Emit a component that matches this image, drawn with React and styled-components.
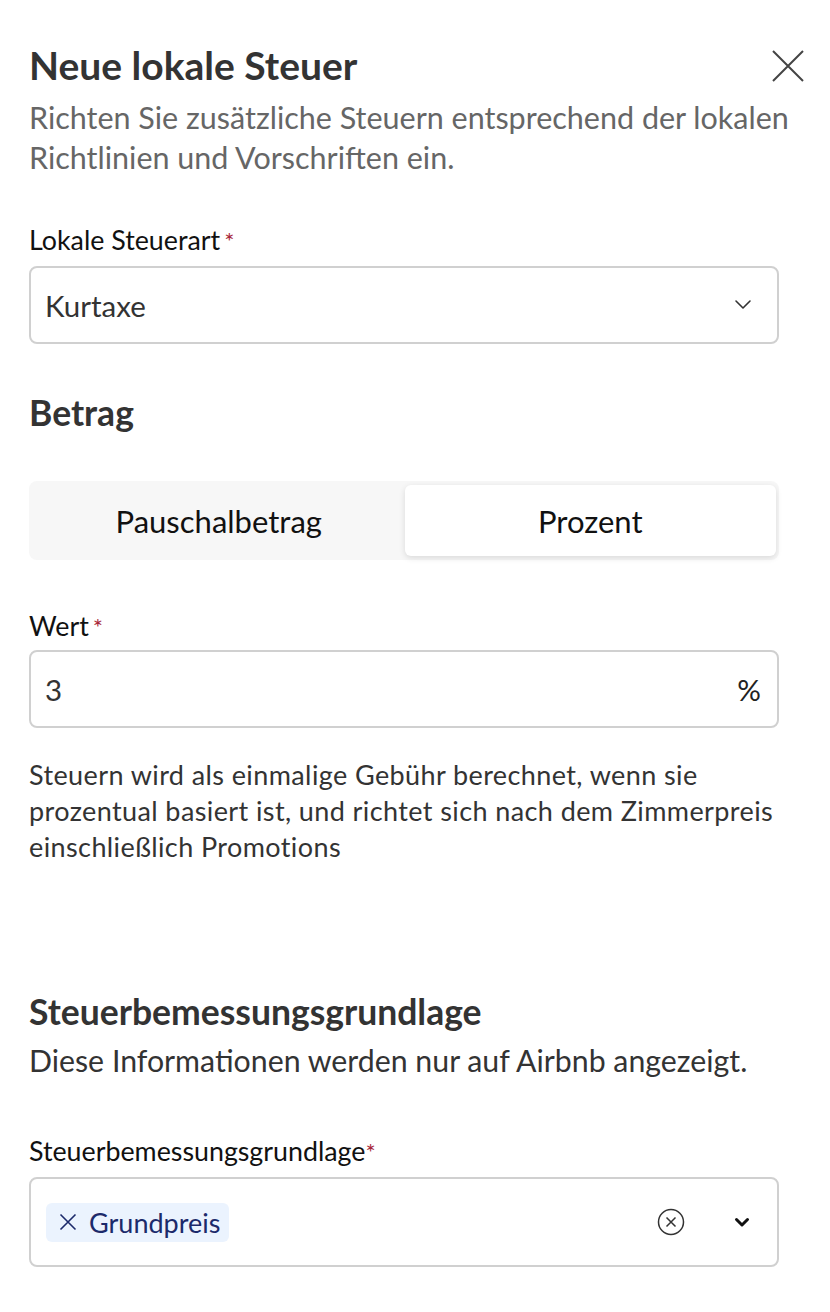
import React, { useState } from 'react';
import styled, { createGlobalStyle } from 'styled-components';

const GlobalStyle = createGlobalStyle`
  html, body {
    margin: 0;
    padding: 0;
    background: #ffffff;
  }
  body {
    font-family: Lato, "Noto Sans", sans-serif;
    color: #222222;
  }
  * { box-sizing: border-box; }
`;

const Page = styled.div`
  width: 830px;
  padding: 42px 25px 40px 29px;
`;

const Header = styled.div`
  display: flex;
  justify-content: space-between;
  align-items: flex-start;
`;

const Title = styled.h1`
  margin: 0;
  font-size: 39px;
  line-height: 46px;
  font-weight: 700;
  color: #333333;
`;

const CloseButton = styled.button`
  border: none;
  background: none;
  padding: 0;
  margin-top: 7px;
  width: 34px;
  height: 34px;
  cursor: pointer;
  display: flex;
  align-items: center;
  justify-content: center;
`;

const Intro = styled.p`
  margin: 9px 0 0;
  font-size: 30.5px;
  line-height: 40px;
  color: #666666;
`;

const Form = styled.div`
  width: 750px;
`;

const Field = styled.div`
  margin-top: ${p => p.$top || 0}px;
`;

const Label = styled.div`
  font-size: 26.8px;
  line-height: 32px;
  color: #111111;
  margin-bottom: ${p => p.$gap || 9}px;
`;

const Required = styled.span`
  color: #a8283a;
  margin-left: ${p => (p.$tight ? 0 : 4)}px;
  font-size: 24px;
`;

const Box = styled.div`
  display: flex;
  align-items: center;
  height: ${p => p.$height || 78}px;
  border: 2px solid #d0d0d0;
  border-radius: 8px;
  padding: 0 16px 0 ${p => p.$left || 14}px;
  font-size: 29.5px;
  color: #333333;
`;

const BoxValue = styled.div`
  flex: 1;
`;

const Suffix = styled.span`
  color: #222222;
`;

const ChevronSlot = styled.div`
  display: flex;
  align-items: center;
  margin-right: 9px;
`;

const SectionTitle = styled.h2`
  margin: ${p => p.$top || 0}px 0 0;
  font-size: 35.5px;
  line-height: 42px;
  font-weight: 700;
  color: #333333;
`;

const SectionText = styled.p`
  margin: 7px 0 0;
  font-size: 30.3px;
  line-height: 40px;
  color: #333333;
`;

const Segmented = styled.div`
  margin-top: 47px;
  display: grid;
  grid-template-columns: 1fr 1fr;
  padding: 4px 3px 4px 4px;
  height: 79px;
  background: #f7f7f7;
  border-radius: 8px;
`;

const Segment = styled.button`
  border: none;
  font-family: inherit;
  font-size: 31px;
  color: #111111;
  border-radius: 6px;
  cursor: pointer;
  background: ${p => (p.$active ? '#ffffff' : 'transparent')};
  box-shadow: ${p => (p.$active ? '0 2px 6px rgba(0,0,0,0.12)' : 'none')};
`;

const Help = styled.p`
  margin: 29px -26px 0 0;
  font-size: 27px;
  letter-spacing: 0.4px;
  line-height: 36px;
  color: #333333;
`;

const Chip = styled.div`
  display: flex;
  align-items: center;
  gap: 12px;
  height: 39px;
  padding: 0 9px 0 13px;
  background: #ebf3fe;
  border-radius: 6px;
  color: #1c2a6b;
  font-size: 27px;
`;

const Spacer = styled.div`
  flex: 1;
`;

const IconSlot = styled.div`
  display: flex;
  align-items: center;
  justify-content: center;
  width: 30px;
  margin-left: ${p => p.$ml || 0}px;
  margin-right: ${p => p.$mr || 0}px;
`;

const Chevron = ({ bold }) => (
  <svg width="18" height="12" viewBox="0 0 18 12" fill="none">
    <path
      d={bold ? 'M3.5 3.5l5.5 5.5 5.5-5.5' : 'M2 2l7 7 7-7'}
      stroke={bold ? '#111' : '#333'}
      strokeWidth={bold ? 3 : 1.6}
      strokeLinecap="round"
      strokeLinejoin="round"
    />
  </svg>
);

export default function App() {
  const [mode, setMode] = useState('percent');

  return (
    <>
      <GlobalStyle />
      <Page>
        <Header>
          <Title>Neue lokale Steuer</Title>
          <CloseButton aria-label="Schließen">
            <svg width="34" height="34" viewBox="0 0 34 34">
              <path d="M2 2l30 30M32 2L2 32" stroke="#444" strokeWidth="2" />
            </svg>
          </CloseButton>
        </Header>
        <Intro>
          Richten Sie zusätzliche Steuern entsprechend der lokalen Richtlinien und Vorschriften ein.
        </Intro>

        <Form>
          <Field $top={47}>
            <Label>
              Lokale Steuerart<Required>*</Required>
            </Label>
            <Box>
              <BoxValue>Kurtaxe</BoxValue>
              <ChevronSlot>
                <Chevron />
              </ChevronSlot>
            </Box>
          </Field>

          <SectionTitle $top={48}>Betrag</SectionTitle>

          <Segmented>
            <Segment $active={mode === 'flat'} onClick={() => setMode('flat')}>
              Pauschalbetrag
            </Segment>
            <Segment $active={mode === 'percent'} onClick={() => setMode('percent')}>
              Prozent
            </Segment>
          </Segmented>

          <Field $top={50}>
            <Label $gap={7}>
              Wert<Required>*</Required>
            </Label>
            <Box>
              <BoxValue>3</BoxValue>
              <Suffix>%</Suffix>
            </Box>
          </Field>

          <Help>
            Steuern wird als einmalige Gebühr berechnet, wenn sie prozentual basiert ist, und richtet
            sich nach dem Zimmerpreis einschließlich Promotions
          </Help>

          <SectionTitle $top={126}>Steuerbemessungsgrundlage</SectionTitle>
          <SectionText>Diese Informationen werden nur auf Airbnb angezeigt.</SectionText>

          <Field $top={55}>
            <Label $gap={9}>
              Steuerbemessungsgrundlage<Required $tight>*</Required>
            </Label>
            <Box $height={90} $left={15}>
              <Chip>
                <svg width="18" height="18" viewBox="0 0 18 18">
                  <path d="M1.5 1.5l15 15M16.5 1.5l-15 15" stroke="#1c2a6b" strokeWidth="1.6" />
                </svg>
                Grundpreis
              </Chip>
              <Spacer />
              <IconSlot>
                <svg width="28" height="28" viewBox="0 0 28 28">
                  <circle cx="14" cy="14" r="12.5" fill="none" stroke="#333" strokeWidth="1.5" />
                  <path d="M9.5 9.5l9 9M18.5 9.5l-9 9" stroke="#333" strokeWidth="1.5" />
                </svg>
              </IconSlot>
              <IconSlot $ml={41} $mr={4}>
                <Chevron bold />
              </IconSlot>
            </Box>
          </Field>
        </Form>
      </Page>
    </>
  );
}
